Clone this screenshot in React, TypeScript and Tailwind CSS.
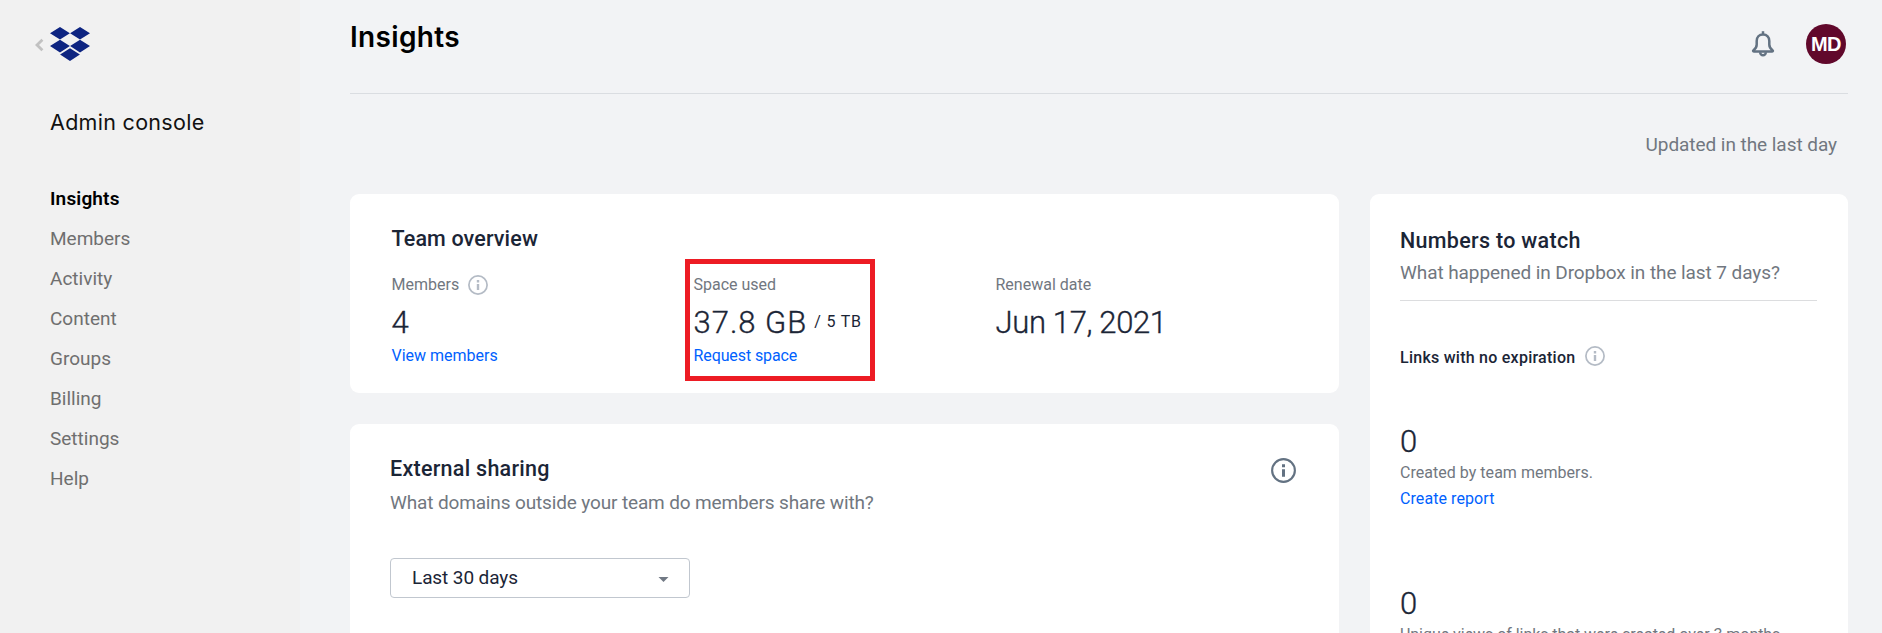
import type { ReactNode } from "react";

const navItems = [
  { label: "Insights", active: true },
  { label: "Members" },
  { label: "Activity" },
  { label: "Content" },
  { label: "Groups" },
  { label: "Billing" },
  { label: "Settings" },
  { label: "Help" },
];

function DropboxLogo() {
  return (
    <svg width="40" height="34" viewBox="0 0 40 34" fill="#0d2481">
      <path d="M10 0 19.9 6.3 10 12.6 0 6.3zM30 0 40 6.3 30 12.6 20.1 6.3zM10 12.8 19.9 19.1 10 25.4 0 19.1zM30 12.8 40 19.1 30 25.4 20.1 19.1zM20 21.2 29.9 27.5 20 33.9 10.1 27.5z" />
    </svg>
  );
}

function InfoIcon({ size, className }: { size: number; className: string }) {
  return (
    <svg width={size} height={size} viewBox="0 0 20 20" fill="none" className={className}>
      <circle cx="10" cy="10" r="9.1" stroke="currentColor" strokeWidth="1.7" />
      <path d="M8.8 5h2.4v2.4H8.8zM8.8 9h2.4v6H8.8z" fill="currentColor" />
    </svg>
  );
}

function BellIcon() {
  return (
    <svg width="24" height="26" viewBox="0 0 24 26" fill="none" stroke="#637282" strokeWidth="2.5">
      <path d="M12 .2v3" />
      <path
        d="M12 3.6c-4 0-6.3 2.7-6.3 6.4v3.6c0 2.6-.9 4-3.2 5.6-.7.5-.5 1.4.3 1.4h18.4c.8 0 1-.9.3-1.4-2.3-1.6-3.2-3-3.2-5.6V10c0-3.700-2.300-6.400-6.300-6.400z"
        strokeLinejoin="round"
      />
      <path d="M9.2 21.2a2.8 3.1 0 0 0 5.6 0" />
    </svg>
  );
}

function Sidebar() {
  return (
    <aside className="w-[300px] shrink-0 bg-[#f1f1f1]">
      <div className="flex items-center pl-[35px] pt-[27px]">
        <svg width="9" height="14" viewBox="0 0 9 14" fill="none" className="mr-[6px] mt-[2px]">
          <path d="M7.4 1.7 2 7l5.4 5.3" stroke="#c1c1c1" strokeWidth="2.8" />
        </svg>
        <DropboxLogo />
      </div>
      <div className="mt-[46px] pl-[50px] font-[Inter,sans-serif] text-[21.5px] leading-[30px] tracking-[0.3px] text-[#111]">
        Admin console
      </div>
      <nav className="mt-[42px] flex flex-col pl-[50px]">
        {navItems.map((item) => (
          <a
            key={item.label}
            className={
              item.active
                ? "text-[19px] font-semibold leading-10 tracking-[0.15px] text-black"
                : "text-[19px] leading-10 text-[#6f6f6f]"
            }
          >
            {item.label}
          </a>
        ))}
      </nav>
    </aside>
  );
}

function Stat({ label, children }: { label: ReactNode; children: ReactNode }) {
  return (
    <div className="w-[302px]">
      <div className="flex h-5 items-center text-[16px] leading-5 text-[#717780]">{label}</div>
      {children}
    </div>
  );
}

function TeamOverview() {
  return (
    <section className="h-[199px] rounded-[9px] bg-white pl-[41.5px] pt-[30px]">
      <h2 className="text-[21.5px] font-medium leading-[30px] tracking-[0.13px] text-[#1b2536]">
        Team overview
      </h2>
      <div className="mt-[21px] flex">
        <Stat
          label={
            <>
              Members
              <InfoIcon size={20} className="ml-[9px] text-[#b4bbc5]" />
            </>
          }
        >
          <div className="mt-[8px] text-[31px] font-light leading-[40px] text-[#1b2536] [-webkit-text-stroke:0.35px]">
            4
          </div>
          <a className="mt-px block text-[16px] leading-6 text-[#0061fe]">View members</a>
        </Stat>
        <div className="relative">
          <Stat label="Space used">
            <div className="mt-[8px] flex leading-[40px] text-[#1b2536]">
              <span className="text-[31px] font-light tracking-[1px] [-webkit-text-stroke:0.35px]">
                37.8 GB
              </span>
              <span className="ml-[7px] text-[16px] leading-[37px] tracking-[0.8px]">/ 5 TB</span>
            </div>
            <a className="mt-px block text-[16px] leading-6 tracking-[-0.1px] text-[#0061fe]">
              Request space
            </a>
          </Stat>
          {/* Highlight frame around the storage figures */}
          <div className="absolute -left-[8.5px] -top-[16px] h-[122px] w-[190px] border-[5px] border-[#ed1c24]" />
        </div>
        <Stat label="Renewal date">
          <div className="mt-[8px] text-[31px] font-light leading-[40px] tracking-[-0.35px] text-[#1b2536] [-webkit-text-stroke:0.35px]">
            Jun 17, 2021
          </div>
        </Stat>
      </div>
    </section>
  );
}

function ExternalSharing() {
  return (
    <section className="h-[260px] rounded-t-[9px] bg-white pl-10 pr-[43px] pt-[30px]">
      <div className="flex justify-between">
        <div>
          <h2 className="text-[21.5px] font-medium leading-[30px] tracking-[0.27px] text-[#1b2536]">
            External sharing
          </h2>
          <p className="mt-[5px] text-[19px] leading-[28px] tracking-[-0.14px] text-[#717780]">
            What domains outside your team do members share with?
          </p>
        </div>
        <InfoIcon size={25} className="mt-1 text-[#637282]" />
      </div>
      <div className="mt-[41px] flex h-10 w-[300px] items-center justify-between rounded-[4px] border border-[#c1c7cf] pl-[21px] pr-[20px] text-[19px] tracking-[-0.1px] text-[#1b2536]">
        Last 30 days
        <svg width="11" height="5" viewBox="0 0 11 5" fill="#717984" className="mt-[2px]">
          <path d="M.5 0h10L5.500 5z" />
        </svg>
      </div>
    </section>
  );
}

function NumbersToWatch() {
  return (
    <section className="h-[490px] w-[478px] shrink-0 rounded-t-[9px] bg-white pl-[30px] pr-[31px] pt-[32px]">
      <div className="h-[75px] border-b border-[#dcdddf]">
        <h2 className="text-[21.5px] font-medium leading-[30px] tracking-[0.3px] text-[#1b2536]">
          Numbers to watch
        </h2>
        <p className="mt-[3px] text-[19px] leading-[28px] tracking-[-0.08px] text-[#717780]">
          What happened in Dropbox in the last 7 days?
        </p>
      </div>
      <div className="mt-[45px] flex items-start">
        <h3 className="pt-[2px] text-[16px] font-medium leading-[20px] tracking-[0.25px] text-[#1b2536]">
          Links with no expiration
        </h3>
        <InfoIcon size={20} className="ml-[10px] text-[#b4bbc5]" />
      </div>
      <div className="mt-[54px] text-[31px] font-light leading-[40px] text-[#1b2536] [-webkit-text-stroke:0.35px]">
        0
      </div>
      <p className="-mt-px text-[16px] leading-6 tracking-[0.03px] text-[#717780]">
        Created by team members.
      </p>
      <a className="mt-[2px] block text-[16px] leading-6 tracking-[0.08px] text-[#0061fe]">
        Create report
      </a>
      <div className="mt-[73px] text-[31px] font-light leading-[40px] text-[#1b2536] [-webkit-text-stroke:0.35px]">
        0
      </div>
      <p className="-mt-px text-[16px] leading-6 tracking-[-0.05px] text-[#717780]">
        Unique views of links that were created over 3 months
      </p>
    </section>
  );
}

export default function App() {
  return (
    <div className="flex h-[633px] w-[1882px] overflow-hidden bg-[#f2f3f5] font-[Roboto,sans-serif]">
      <Sidebar />
      <main className="ml-[50px] w-[1498px]">
        <header className="flex h-[94px] justify-between border-b border-[#dadde1]">
          <h1 className="pt-[20px] font-[Inter,sans-serif] text-[28px] font-semibold leading-[34px] tracking-[0.35px] text-black">
            Insights
          </h1>
          <div className="flex pt-6">
            <div className="mr-[31px] mt-[7px]">
              <BellIcon />
            </div>
            <div className="mr-[2px] flex size-10 items-center justify-center rounded-full bg-[#61082b] font-['Liberation_Sans',sans-serif] text-[20px] font-bold tracking-[-0.5px] text-white">
              MD
            </div>
          </div>
        </header>
        <div className="mt-[37px] pr-[11px] text-right text-[19px] leading-[28px] tracking-[-0.05px] text-[#717780]">
          Updated in the last day
        </div>
        <div className="mt-[35px] flex justify-between">
          <div className="flex w-[989px] flex-col gap-[31px]">
            <TeamOverview />
            <ExternalSharing />
          </div>
          <NumbersToWatch />
        </div>
      </main>
    </div>
  );
}
